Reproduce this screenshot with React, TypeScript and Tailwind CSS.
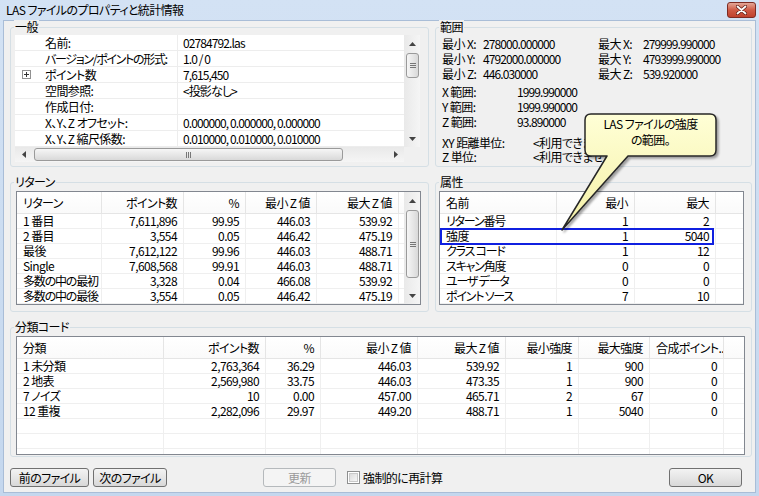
import React from 'react';

const FONT = "font-['Noto_Sans_CJK_JP',sans-serif] [font-feature-settings:'palt'] tracking-[-0.6px]";

function UpArrow() {
  return (
    <svg width="7" height="4" viewBox="0 0 7 4">
      <path d="M0 4 L3.5 0 L7 4 Z" fill="#444" />
    </svg>
  );
}
function DownArrow() {
  return (
    <svg width="7" height="4" viewBox="0 0 7 4">
      <path d="M0 0 L3.5 4 L7 0 Z" fill="#444" />
    </svg>
  );
}
function LeftArrow() {
  return (
    <svg width="4" height="7" viewBox="0 0 4 7">
      <path d="M4 0 L0 3.5 L4 7 Z" fill="#444" />
    </svg>
  );
}
function RightArrow() {
  return (
    <svg width="4" height="7" viewBox="0 0 4 7">
      <path d="M0 0 L4 3.5 L0 7 Z" fill="#444" />
    </svg>
  );
}

function VScroll({ thumb }: { thumb: string }) {
  return (
    <div className="w-[16px] h-full shrink-0 flex flex-col bg-linear-to-r from-[#e9e9e9] to-[#f5f5f5]">
      <div className="h-[17px] shrink-0 flex items-center justify-center">
        <UpArrow />
      </div>
      <div
        className={`${thumb} shrink-0 mt-[1px] ml-[2px] mr-[1px] rounded-[3px] border border-[#9a9a9a] bg-linear-to-r from-[#f6f6f6] to-[#d9d9d9] flex flex-col items-center justify-center gap-[1px]`}
      >
        <div className="w-[6px] h-[1px] bg-[#777]" />
        <div className="w-[6px] h-[1px] bg-[#777]" />
        <div className="w-[6px] h-[1px] bg-[#777]" />
      </div>
      <div className="flex-1" />
      <div className="h-[17px] shrink-0 flex items-center justify-center">
        <DownArrow />
      </div>
    </div>
  );
}

function HScroll() {
  return (
    <div className="w-[389px] h-[15px] shrink-0 flex items-center bg-linear-to-b from-[#e9e9e9] to-[#f5f5f5]">
      <div className="w-[17px] h-full shrink-0 flex items-center justify-center">
        <LeftArrow />
      </div>
      <div className="w-[309px] h-[13px] ml-[2px] rounded-[3px] border border-[#9a9a9a] bg-linear-to-b from-[#f6f6f6] to-[#d9d9d9] flex items-center justify-center gap-[1px]">
        <div className="w-[1px] h-[6px] bg-[#777]" />
        <div className="w-[1px] h-[6px] bg-[#777]" />
        <div className="w-[1px] h-[6px] bg-[#777]" />
      </div>
      <div className="flex-1" />
      <div className="w-[17px] h-full shrink-0 flex items-center justify-center">
        <RightArrow />
      </div>
    </div>
  );
}

function GroupBox({
  label,
  className,
  children,
}: {
  label: string;
  className: string;
  children: React.ReactNode;
}) {
  return (
    <div className={`relative border border-[#d5dfe5] rounded-[3px] shrink-0 ${className}`}>
      <div className="absolute -top-[8px] left-[3px] bg-[#f0f0f0] px-[1px] h-[14px] leading-[14px] text-[12px]">
        {label}
      </div>
      {children}
    </div>
  );
}

type Col = { w: string; label: string; right?: boolean; headLeft?: boolean };

function ListTable({
  cols,
  rows,
  outer,
  emptyRows,
  scroll,
}: {
  cols: Col[];
  rows: string[][];
  outer: string;
  emptyRows: number;
  scroll?: boolean;
}) {
  const all = [...rows, ...Array.from({ length: emptyRows }, () => cols.map(() => ''))];
  return (
    <div className={`border border-[#828790] bg-white overflow-hidden flex ${outer}`}>
      <div className="flex-1 min-w-0 flex flex-col">
        <div className="flex h-[22px] shrink-0 border-b border-[#e5e5e5] bg-linear-to-b from-white to-[#fafafa]">
          {cols.map((c, i) => (
            <div
              key={i}
              className={`${c.w} shrink-0 border-r border-[#e5e5e5] px-[6px] flex items-center whitespace-nowrap overflow-hidden ${
                c.right && !c.headLeft ? 'justify-end' : 'justify-start'
              }`}
            >
              {c.label}
            </div>
          ))}
          <div className="flex-1" />
        </div>
        {all.map((r, ri) => (
          <div key={ri} className="flex h-[15px] shrink-0 border-b border-[#efefef]">
            {cols.map((c, i) => (
              <div
                key={i}
                className={`${c.w} shrink-0 border-r border-[#efefef] px-[6px] flex items-center whitespace-nowrap ${
                  c.right ? 'justify-end' : 'justify-start'
                }`}
              >
                {r[i] && r[i].length > 5 && /[ぁ-んァ-ン]/.test(r[i]) ? (
                  <span className="tracking-[-1.2px]">{r[i]}</span>
                ) : (
                  r[i]
                )}
              </div>
            ))}
            <div className="flex-1" />
          </div>
        ))}
      </div>
      {scroll && <VScroll thumb="h-[68px]" />}
    </div>
  );
}

function Button({
  children,
  className,
  disabled,
}: {
  children: React.ReactNode;
  className: string;
  disabled?: boolean;
}) {
  return (
    <div
      className={`h-[19px] shrink-0 rounded-[3px] border flex items-center justify-center text-[12px] ${
        disabled
          ? 'border-[#b5b9bc] bg-[#f4f4f4] text-[#9a9a9a]'
          : 'border-[#707070] bg-linear-to-b from-[#f3f3f3] via-[#e6e6e6] to-[#d8d8d8] text-black'
      } ${className}`}
    >
      {children}
    </div>
  );
}

const propRows: { name: string; value: string; expand?: boolean; tight?: boolean }[] = [
  { name: '名前:', value: '02784792.las' },
  { name: 'バージョン/ポイントの形式:', value: '1.0 / 0', tight: true },
  { name: 'ポイント数', value: '7,615,450', expand: true },
  { name: '空間参照:', value: '<投影なし>' },
  { name: '作成日付:', value: '' },
  { name: 'X、Y、Z オフセット:', value: '0.000000, 0.000000, 0.000000' },
  { name: 'X、Y、Z 縮尺係数:', value: '0.010000, 0.010000, 0.010000' },
];

const returnCols: Col[] = [
  { w: 'w-[85px]', label: 'リターン' },
  { w: 'w-[82px]', label: 'ポイント数', right: true },
  { w: 'w-[62px]', label: '%', right: true },
  { w: 'w-[71px]', label: '最小 Z 値', right: true },
  { w: 'w-[82px]', label: '最大 Z 値', right: true },
];
const returnRows = [
  ['1 番目', '7,611,896', '99.95', '446.03', '539.92'],
  ['2 番目', '3,554', '0.05', '446.42', '475.19'],
  ['最後', '7,612,122', '99.96', '446.03', '488.71'],
  ['Single', '7,608,568', '99.91', '446.03', '488.71'],
  ['多数の中の最初', '3,328', '0.04', '466.08', '539.92'],
  ['多数の中の最後', '3,554', '0.05', '446.42', '475.19'],
];

const attrCols: Col[] = [
  { w: 'w-[117px]', label: '名前' },
  { w: 'w-[78px]', label: '最小', right: true },
  { w: 'w-[81px]', label: '最大', right: true },
];
const attrRows = [
  ['リターン番号', '1', '2'],
  ['強度', '1', '5040'],
  ['クラス コード', '1', '12'],
  ['スキャン角度', '0', '0'],
  ['ユーザ データ', '0', '0'],
  ['ポイント ソース', '7', '10'],
];

const classCols: Col[] = [
  { w: 'w-[147px]', label: '分類' },
  { w: 'w-[102px]', label: 'ポイント数', right: true },
  { w: 'w-[55px]', label: '%', right: true },
  { w: 'w-[97px]', label: '最小 Z 値', right: true },
  { w: 'w-[88px]', label: '最大 Z 値', right: true },
  { w: 'w-[73px]', label: '最小強度', right: true },
  { w: 'w-[71px]', label: '最大強度', right: true },
  { w: 'w-[74px]', label: '合成ポイント..', right: true, headLeft: true },
];
const classRows = [
  ['1 未分類', '2,763,364', '36.29', '446.03', '539.92', '1', '900', '0'],
  ['2 地表', '2,569,980', '33.75', '446.03', '473.35', '1', '900', '0'],
  ['7 ノイズ', '10', '0.00', '457.00', '465.71', '2', '67', '0'],
  ['12 重複', '2,282,096', '29.97', '449.20', '488.71', '1', '5040', '0'],
];

export default function App() {
  return (
    <div
      className={`relative w-[759px] h-[496px] overflow-hidden flex flex-col bg-linear-to-b from-[#d3e2f4] to-[#c4d7ee] text-black ${FONT}`}
    >
      {/* title bar */}
      <div className="h-[20px] shrink-0 flex items-start">
        <div className="pl-[6px] pt-[2px] text-[12px] leading-[16px] text-black">
          LAS ファイルのプロパティと統計情報
        </div>
        <div className="ml-auto mr-[3px] mt-[2px] w-[29px] h-[16px] rounded-[3px] border border-[#7d2b22] bg-linear-to-b from-[#e2a697] via-[#cf5a45] to-[#c0412d] flex items-center justify-center">
          <svg width="11" height="10" viewBox="0 0 11 10">
            <path d="M1.5 1.5 L9.5 8.5 M9.5 1.5 L1.5 8.5" stroke="#5a1a12" strokeWidth="3.2" strokeLinecap="round" />
            <path d="M1.5 1.5 L9.5 8.5 M9.5 1.5 L1.5 8.5" stroke="#ffffff" strokeWidth="1.8" strokeLinecap="round" />
          </svg>
        </div>
      </div>

      {/* dialog body */}
      <div className="mx-[3px] mb-[3px] h-[473px] shrink-0 bg-[#f0f0f0] border border-[#a9bdd7] pt-[6px] pl-[6px] pr-[3px] pb-[5px] flex flex-col text-[12px] leading-[14px]">
        {/* row 1 */}
        <div className="flex gap-[6px] h-[140px] shrink-0">
          <GroupBox label="一般" className="w-[419px] h-[140px] pt-[7px] pl-[4px]">
            <div className="w-[405px] h-[127px] bg-white flex flex-col">
              <div className="flex h-[112px]">
                <div className="w-[389px] flex flex-col">
                  {propRows.map((r, i) => (
                    <div key={i} className="flex h-[16px] shrink-0 border-b border-[#ededed]">
                      <div className="w-[22px] shrink-0 flex items-center justify-center">
                        {r.expand && (
                          <div className="w-[9px] h-[9px] border border-[#919191] bg-white relative flex items-center justify-center">
                            <div className="absolute w-[5px] h-[1px] bg-[#333]" />
                            <div className="absolute w-[1px] h-[5px] bg-[#333]" />
                          </div>
                        )}
                      </div>
                      <div
                        className={`w-[141px] shrink-0 border-r border-[#ededed] pl-[8px] flex items-center whitespace-nowrap ${
                          r.tight ? 'tracking-[-1.3px]' : ''
                        }`}
                      >
                        {r.name}
                      </div>
                      <div className="flex-1 pl-[5px] flex items-center whitespace-nowrap tracking-[-0.9px]">
                        {r.value}
                      </div>
                    </div>
                  ))}
                </div>
                <VScroll thumb="h-[25px]" />
              </div>
              <div className="flex">
                <HScroll />
                <div className="w-[16px] h-[15px] bg-[#f0f0f0]" />
              </div>
            </div>
          </GroupBox>

          <GroupBox label="範囲" className="w-[317px] h-[140px] pt-[8px] pl-[6px]">
            <div className="flex flex-col">
              {[
                ['最小 X:', '278000.000000', '最大 X:', '279999.990000'],
                ['最小 Y:', '4792000.000000', '最大 Y:', '4793999.990000'],
                ['最小 Z:', '446.030000', '最大 Z:', '539.920000'],
              ].map((r, i) => (
                <div key={i} className="flex h-[15px] items-center whitespace-nowrap">
                  <div className="w-[41px] shrink-0">{r[0]}</div>
                  <div className="w-[115px] shrink-0 tracking-[-0.9px]">{r[1]}</div>
                  <div className="w-[45px] shrink-0">{r[2]}</div>
                  <div className="tracking-[-0.9px]">{r[3]}</div>
                </div>
              ))}
              <div className="h-[3px]" />
              {[
                ['X 範囲:', '1999.990000'],
                ['Y 範囲:', '1999.990000'],
                ['Z 範囲:', '93.890000'],
              ].map((r, i) => (
                <div key={i} className="flex h-[15px] items-center whitespace-nowrap">
                  <div className="w-[75px] shrink-0">{r[0]}</div>
                  <div className="tracking-[-0.9px]">{r[1]}</div>
                </div>
              ))}
              <div className="h-[7px]" />
              {[
                ['XY 距離単位:', '<利用できません>'],
                ['Z 単位:', '<利用できません>'],
              ].map((r, i) => (
                <div key={i} className="flex h-[14px] items-center whitespace-nowrap">
                  <div className="w-[91px] shrink-0">{r[0]}</div>
                  <div>{r[1]}</div>
                </div>
              ))}
            </div>
          </GroupBox>
        </div>

        {/* row 2 */}
        <div className="flex gap-[6px] h-[130px] mt-[15px] shrink-0">
          <GroupBox label="リターン" className="w-[419px] h-[130px] pt-[8px] pl-[5px]">
            <ListTable cols={returnCols} rows={returnRows} outer="w-[405px] h-[114px]" emptyRows={0} scroll />
          </GroupBox>
          <GroupBox label="属性" className="w-[317px] h-[130px] pt-[8px] pl-[3px]">
            <ListTable cols={attrCols} rows={attrRows} outer="w-[305px] h-[114px]" emptyRows={1} />
          </GroupBox>
        </div>

        {/* row 3 */}
        <GroupBox label="分類コード" className="w-[742px] h-[130px] mt-[15px] pt-[8px] pl-[5px]">
          <ListTable cols={classCols} rows={classRows} outer="w-[729px] h-[119px]" emptyRows={3} />
        </GroupBox>

        {/* buttons */}
        <div className="flex items-center h-[19px] mt-[11px] shrink-0">
          <Button className="w-[79px]">前のファイル</Button>
          <Button className="w-[74px] ml-[4px]">次のファイル</Button>
          <Button className="w-[73px] ml-[96px]" disabled>
            更新
          </Button>
          <div className="ml-[11px] w-[13px] h-[13px] border border-[#8e8f8f] bg-white p-[1px]">
            <div className="w-full h-full bg-linear-to-br from-[#dcdcdc] to-[#f6f6f6] border border-[#c9c9c9]" />
          </div>
          <div className="ml-[3px]">強制的に再計算</div>
          <Button className="w-[73px] ml-auto mr-[10px]">OK</Button>
        </div>
      </div>

      {/* annotation overlay */}
      <svg className="absolute inset-0 pointer-events-none" width="759" height="496" viewBox="0 0 759 496">
        <defs>
          <linearGradient id="cg" x1="0" y1="0" x2="0" y2="1">
            <stop offset="0" stopColor="#ffffd6" />
            <stop offset="1" stopColor="#f4f0a6" />
          </linearGradient>
          <filter id="sh" x="-20%" y="-20%" width="140%" height="140%">
            <feDropShadow dx="2" dy="2" stdDeviation="1.2" floodColor="#000" floodOpacity="0.35" />
          </filter>
        </defs>
        <rect x="441" y="229" width="272" height="15" fill="none" stroke="#1020e0" strokeWidth="2" />
        <path
          d="M591 114 H710 Q716 114 716 120 V150 Q716 156 710 156 H628 L562 230 L607 156 H591 Q585 156 585 150 V120 Q585 114 591 114 Z"
          fill="url(#cg)"
          stroke="#262626"
          strokeWidth="1.5"
          strokeLinejoin="round"
          filter="url(#sh)"
        />
      </svg>
      <div className="absolute left-[585px] top-[116px] w-[131px] flex flex-col items-center text-[12px] leading-[16px] text-black">
        <div>LAS ファイルの強度</div>
        <div>の範囲。</div>
      </div>
    </div>
  );
}
